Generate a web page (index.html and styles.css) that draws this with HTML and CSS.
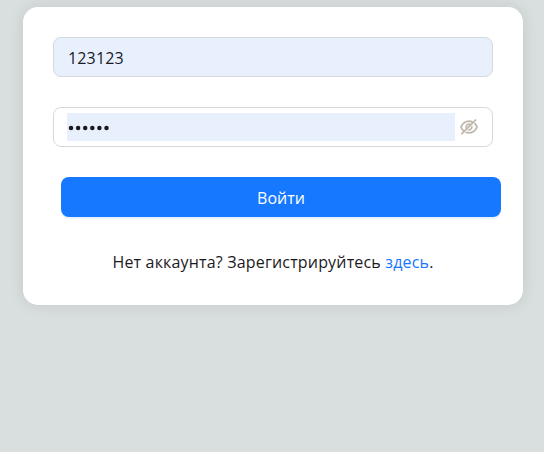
FILE: index.html
```html
<!DOCTYPE html>
<html lang="ru">
<head>
<meta charset="utf-8">
<title>Вход</title>
<link rel="stylesheet" href="styles.css">
</head>
<body>
<main class="card">
  <div class="field field-filled"><span class="value">123123</span></div>
  <div class="field field-password">
    <span class="password">
      <svg class="dots" viewBox="0 0 44 6" aria-hidden="true">
        <circle cx="4" cy="3" r="2.25"/><circle cx="11.1" cy="3" r="2.25"/><circle cx="18.2" cy="3" r="2.25"/>
        <circle cx="25.3" cy="3" r="2.25"/><circle cx="32.4" cy="3" r="2.25"/><circle cx="39.5" cy="3" r="2.25"/>
      </svg>
    </span>
    <svg class="eye" viewBox="64 64 896 896" aria-hidden="true">
      <path d="M942.2 486.2Q889.47 375.11 816.7 305l-50.88 50.88C807.31 395.53 843.45 447.4 874.7 512 791.5 684.2 673.4 766 512 766q-72.67 0-133.87-22.38L323 798.75Q408 838 512 838q288.3 0 430.2-300.3a60.29 60.29 0 000-51.5zm-63.57-320.64L836 122.88a8 8 0 00-11.32 0L715.31 232.2Q624.86 186 512 186q-288.3 0-430.2 300.3a60.3 60.3 0 000 51.5q56.69 119.4 136.5 191.41L112.48 835a8 8 0 000 11.31L155.17 889a8 8 0 0011.31 0l712.15-712.12a8 8 0 000-11.32zM149.3 512C232.6 339.8 350.7 258 512 258c54.54 0 104.13 9.36 149.12 28.39l-70.3 70.3a176 176 0 00-238.13 238.13l-83.42 83.42C223.1 637.49 183.3 582.28 149.3 512zm246.7 0a112.11 112.11 0 01146.2-106.69L401.31 546.2A112 112 0 01396 512z"/>
      <path d="M508 624c-3.46 0-6.87-.16-10.25-.47l-52.82 52.82a176.09 176.09 0 00227.42-227.42l-52.82 52.82c.31 3.38.47 6.79.47 10.25a111.94 111.94 0 01-112 112z"/>
    </svg>
  </div>
  <button class="submit" type="button">Войти</button>
  <p class="note">Нет аккаунта? Зарегистрируйтесь <a class="link" href="#">здесь</a>.</p>
</main>
</body>
</html>
```
FILE: styles.css
```css
* { box-sizing: border-box; }
body {
  margin: 0;
  padding: 7px 0 0 23px;
  min-height: 452px;
  background: #d9dfde;
  font-family: "Open Sans", "Noto Sans", sans-serif;
  color: #1c1a1e;
}
.card {
  width: 500px;
  height: 298px;
  padding: 30px;
  border-radius: 15px;
  background: #fff;
  box-shadow: 0 0 15px rgba(0, 0, 0, 0.1);
}
.field {
  display: flex;
  align-items: center;
  width: 440px;
  height: 40px;
  margin-bottom: 30px;
  border: 1px solid #d5d9d9;
  border-radius: 8px;
  font-size: 16px;
  line-height: 24px;
}
.field-filled {
  padding: 2px 13px 0 14px;
  background: #e8f0fe;
}
.value { letter-spacing: 0.15px; }
.field-password { padding: 0 13px; }
.password {
  display: flex;
  align-items: center;
  width: 388px;
  height: 28px;
  padding-top: 2px;
  background: #e8f0fe;
}
.dots {
  width: 44px;
  height: 6px;
  fill: #1c1a1e;
}
.eye {
  width: 18px;
  height: 18px;
  margin-left: 4.5px;
  fill: #bdb5a8;
  stroke: #bdb5a8;
  stroke-width: 16;
}
.submit {
  display: block;
  width: 440px;
  height: 40px;
  margin: 0 0 0 8px;
  padding: 2px 0 0;
  border: 0;
  border-radius: 8px;
  background: #1677ff;
  box-shadow: 0 2px 0 rgba(5, 145, 255, 0.1);
  color: #fff;
  font: 16px/24px "Open Sans", "Noto Sans", sans-serif;
}
.note {
  margin: 33px 0 0;
  font-size: 16px;
  line-height: 24px;
  letter-spacing: 0.17px;
  text-align: center;
  white-space: nowrap;
}
.link {
  color: #1677ff;
  text-decoration: none;
}
```
